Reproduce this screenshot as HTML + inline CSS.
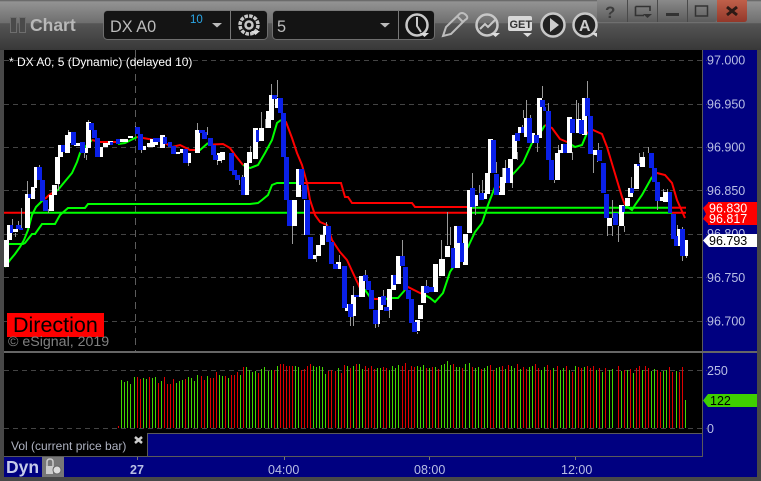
<!DOCTYPE html>
<html><head><meta charset="utf-8"><style>
html,body{margin:0;padding:0;background:#444}
svg{display:block}
text{font-family:"Liberation Sans",sans-serif}
</style></head><body>
<svg xmlns="http://www.w3.org/2000/svg" width="761" height="481" viewBox="0 0 761 481">
<defs>
<linearGradient id="top" x1="0" y1="0" x2="0" y2="1">
<stop offset="0" stop-color="#5e5e5e"/><stop offset=".04" stop-color="#939393"/><stop offset=".46" stop-color="#6e6e6e"/><stop offset=".47" stop-color="#555"/><stop offset="1" stop-color="#383838"/>
</linearGradient>
<linearGradient id="btn" x1="0" y1="0" x2="0" y2="1"><stop offset="0" stop-color="#8a8a8a"/><stop offset="1" stop-color="#5c5c5c"/></linearGradient>
<linearGradient id="cl" x1="0" y1="0" x2="0" y2="1"><stop offset="0" stop-color="#c0604a"/><stop offset="1" stop-color="#93382a"/></linearGradient>
</defs>
<rect width="761" height="481" fill="#484848"/>
<rect width="761" height="50" fill="url(#top)"/>
<!-- title -->
<rect x="10.5" y="17.5" width="6" height="15" fill="#4a4a4a" stroke="#6e6e6e"/>
<rect x="19.5" y="17.5" width="6" height="15" fill="#4a4a4a" stroke="#6e6e6e"/>
<text x="30" y="31" font-size="17.5" font-weight="bold" fill="#b8b8b8">Chart</text>
<!-- symbol box -->
<rect x="103.5" y="10.5" width="164" height="29" rx="4" fill="#141414" stroke="#8a8a8a" stroke-opacity=".7"/>
<path d="M230.5 11V39" stroke="#777"/>
<text x="110" y="32" font-size="16.3" fill="#bcbcbc">DX A0</text>
<text x="190" y="23" font-size="11.5" fill="#2aa6e6">10</text>
<path d="M212 23H222L217 27.500z" fill="#bbb"/>
<!-- gear -->
<g fill="none" stroke="#c8c8c8">
<circle cx="249" cy="25" r="9" stroke-width="3.500" stroke-dasharray="3.500 1.200"/>
<circle cx="249" cy="25" r="3.500" stroke-width="2.500"/>
</g>
<path d="M251 31H260L255.500 35z" fill="#ddd"/>
<!-- interval box -->
<rect x="272.500" y="10.500" width="162" height="29" rx="4" fill="#141414" stroke="#8a8a8a" stroke-opacity=".7"/>
<path d="M398.500 11V39" stroke="#777"/>
<text x="277" y="32" font-size="16.300" fill="#bcbcbc">5</text>
<path d="M380 23H390L385 27.500z" fill="#bbb"/>
<!-- clock -->
<circle cx="417" cy="25" r="10.500" fill="none" stroke="#c8c8c8" stroke-width="2.500"/>
<path d="M417 17V26L421 32" fill="none" stroke="#c8c8c8" stroke-width="2"/>
<path d="M420 33H429L424.500 37z" fill="#ddd"/>
<!-- pencil -->
<path d="M443 36L446 27L460 13.500Q463 12 466 15T465 20L451 34z" fill="none" stroke="#bdbdbd" stroke-width="2"/>
<path d="M457 16L463 22" stroke="#bdbdbd" stroke-width="2"/>
<!-- chart circle -->
<circle cx="487" cy="25" r="10.500" fill="none" stroke="#c8c8c8" stroke-width="2.500"/>
<path d="M480 29L485 24L488 27L495 20" fill="none" stroke="#c8c8c8" stroke-width="2"/>
<path d="M491 33H500L495.500 37z" fill="#ddd"/>
<!-- GET -->
<rect x="508" y="16" width="24" height="15" rx="2" fill="#d8d8d8"/>
<text x="509.500" y="28" font-size="11" font-weight="bold" fill="#333">GET</text>
<path d="M523 33H532L527.500 37z" fill="#ddd"/>
<!-- play -->
<circle cx="553" cy="25" r="11.500" fill="#222" stroke="#c8c8c8" stroke-width="2.500"/>
<path d="M550 18L559 25L550 32z" fill="#ccc"/>
<!-- A -->
<circle cx="585" cy="25" r="11.500" fill="#222" stroke="#c8c8c8" stroke-width="2.500"/>
<text x="579" y="31" font-size="16" font-weight="bold" fill="#ccc">A</text>
<path d="M591 33H597V37z" fill="#ddd"/>
<!-- window buttons -->
<path d="M597 0H717V19Q717 22 714 22H600Q597 22 597 19z" fill="url(#btn)"/>
<path d="M717 0H747V19Q747 22 744 22H717z" fill="url(#cl)"/>
<path d="M627.500 0V22M657.500 0V22M687.500 0V22" stroke="#4a4a4a"/>
<text x="605" y="18" font-size="17" font-weight="bold" fill="#3c3c3c">?</text>
<path d="M635.500 6.500H650V11M635.500 6.500V15.500H644" fill="none" stroke="#333" stroke-width="1.600"/>
<path d="M643 14H652L647.500 18z" fill="#333"/>
<rect x="666" y="13" width="13" height="3" fill="#333"/>
<rect x="695.500" y="6" width="12" height="10" fill="none" stroke="#333" stroke-width="1.500"/>
<path d="M727 7L737 15M737 7L727 15" stroke="#2d1a15" stroke-width="3"/>
<!-- panes -->
<rect x="4" y="50" width="699" height="383" fill="#000"/>
<rect x="703" y="50" width="54" height="427" fill="#000080"/>
<rect x="4" y="433" width="143" height="23" fill="#000"/>
<rect x="147" y="433" width="556" height="23" fill="#000080"/>
<rect x="4" y="457" width="699" height="20" fill="#000080"/>
<rect x="42" y="457" width="22" height="20" fill="#777"/>
<path d="M4 456.500H703M147 433.500H703" stroke="#5a5a5a"/>
<path d="M147.500 433V456M702.500 50V456" stroke="#5a5a5a"/>
<rect x="4" y="351" width="753" height="2" fill="#666"/>
<!-- grid -->
<g stroke="#444" stroke-dasharray="5 4" fill="none">
<path d="M4 60.500H707M4 104.500H707M4 147.500H707M4 190.500H707M4 234.500H707M4 277.500H707M4 321.500H707M4 370.500H707M4 428.500H707"/>
</g>
<path d="M135.500 50V351" stroke="#5c5c5c" stroke-dasharray="7 5"/>
<!-- levels -->
<g fill="none" stroke-width="2">
<path d="M4 212.700H30M305 212.700H467M672 212.700H686" stroke="#f00"/>
<path d="M30 212.700H305M467 212.700H672" stroke="#0f0"/>
<path d="M8 244H23L25 243L32 234H35L42 224H55L60 215L68 208H85L88 204H250L258 203L262 200L268 195L272 185L277 183H300" stroke="#0f0"/>
<path d="M300 183H341L345 197H348L352 203H412L415 207H467" stroke="#f00"/>
<path d="M467 207.700H672" stroke="#0f0"/>
<path d="M672 207.700H686" stroke="#f00"/>
<!-- trend -->
<g stroke="#0f0">
<path d="M5 267L10 260L15 254L20 247L24 240L28 230L32 215L36 207L40 203L44 199"/>
<path d="M54 192L58 190L62 185L72 173L77 162L80 153L85 147L92 140"/>
<path d="M118 144L125 143L137 137"/>
<path d="M196 150L200 150L208 143"/>
<path d="M243 165L250 168L258 165L265 153L272 140L277 123L281 120"/>
<path d="M360 288L365 290L370 297"/>
<path d="M385 299L392 298L398 298L405 290"/>
<path d="M425 295L430 298L435 302L443 293L450 272L460 257L468 247L475 232L482 223L488 205L495 187"/>
<path d="M500 187L515 172L523 163L532 143L542 130L545 125"/>
<path d="M567 142L575 147L582 145L587 133"/>
<path d="M625 205L632 210L635 205L642 195L652 177"/>
</g>
<g stroke="#f00">
<path d="M44 199L46 198L49 195L54 192"/>
<path d="M92 140L100 142H118"/>
<path d="M137 137L143 138L160 141L165 143L172 147L180 145L190 150L196 150"/>
<path d="M208 143L213 144.500L223 144L230 148L235 155L243 165"/>
<path d="M281 120L286 122L292 138L297 153L302 165L307 183L310 200L315 215L320 222L327 225L332 240L340 252L347 260L353 273L360 288"/>
<path d="M370 297L375 299L385 299"/>
<path d="M405 290L408 287L420 293L425 295"/>
<path d="M495 187L500 187"/>
<path d="M545 125L552 128L560 139L567 142"/>
<path d="M587 133L593 130L602 134L607 147L613 167L622 197L625 205"/>
<path d="M652 177L657 173L665 175L672 183L677 200L685 218"/>
</g>
</g>
<!-- wicks -->
<path stroke="#999" fill="none" d="M12.500 219V225M18.500 221V229M21.500 208V230M15.500 233V237M27.500 181V194M39.500 165V170M48.500 209V213M58.500 184V190M68.500 130V135M84.500 153V158M86.500 155V160M88.500 120V123M135.500 126V128M141.500 150V153M163.500 135V137M197.500 123V130M207.500 127V135M188.500 163V166M217.500 160V165M221.500 160V163M235.500 175V180M239.500 180V185M242.500 175V182M250.500 146V152M261.500 112V129M265.500 119V128M271.500 84V95M277.500 80V97M292.500 226V244M316.500 256V262M326.500 222V226M339.500 255V262M353.500 286V297M350.500 311V326M353.500 311V326M365.500 270V276M375.500 324V328M378.500 324V327M383.500 290V296M389.500 310V318M402.500 240V256M408.500 290V299M417.500 332V334M426.500 280V286M447.500 212V245M450.500 227V245M441.500 240V259M472.500 173V190M475.500 205V215M479.500 185V193M482.500 180V193M496.500 162V173M502.500 168V177M505.500 160V175M512.500 183V188M517.500 152V160M522.500 125V130M526.500 100V118M523.500 110V118M530.500 115V118M537.500 143V152M542.500 86V98M548.500 103V111M554.500 180V183M558.500 145V152M572.500 152V160M576.500 100V119M578.500 103V119M587.500 81V98M593.500 153V173M597.500 153V162M598.500 143V150M607.500 226V236M612.500 200V218M612.500 226V236M618.500 226V242M624.500 226V232M631.500 177V188M639.500 153V163M643.500 152V160M648.500 147V153M657.500 200V210M663.500 189V193M667.500 189V193M677.500 225V230M682.500 227V229M682.500 256V261M686.500 256V258"/>
<!-- white bodies -->
<path fill="#fff" d="M4 240H9V267H4zM7 225H12V240H7zM13 229H18V232H13zM25 194H30V228H25zM31 187H35V199H31zM34 167H37V188H34zM49 195H54V211H49zM52 185H57V195H52zM55 157H60V184H55zM58 145H63V157H58zM65 135H70V153H65zM68 132H71V143H68zM74 143H80V146H74zM83 148H88V153H83zM86 122H91V148H86zM98 147H103V157H98zM103 143H108V147H103zM108 141H113V145H108zM120 139H128V142H120zM128 136H133V138H128zM142 146H146V150H142zM147 143H155V147H147zM150 139H158V145H150zM160 135H165V148H160zM176 152H180V154H176zM180 149H184V153H180zM186 153H191V163H186zM195 130H200V153H195zM217 153H222V161H217zM220 152H225V160H220zM244 163H249V195H244zM247 152H252V163H247zM253 128H258V159H253zM259 128H264V141H259zM266 111H271V128H266zM269 95H274V120H269zM275 98H280V108H275zM292 200H297V226H292zM296 169H301V197H296zM304 200H306V235H304zM311 255H316V259H311zM316 245H321V256H316zM320 235H325V245H320zM323 226H328V235H323zM336 262H341V269H336zM345 304H350V311H345zM351 295H356V316H351zM359 276H365V297H359zM375 310H380V324H375zM378 297H383V310H378zM387 289H392V310H387zM391 275H396V290H391zM396 256H401V284H396zM415 320H420V331H415zM418 305H423V319H418zM421 286H426V303H421zM433 264H438V292H433zM439 259H445V276H439zM445 246H450V257H445zM454 226H460V268H454zM463 234H468V265H463zM467 190H472V233H467zM473 195H478V206H473zM482 193H487V199H482zM485 173H490V194H485zM488 139H493V173H488zM497 192H502V195H497zM500 177H505V195H500zM503 168H508V183H503zM508 159H513V183H508zM512 135H517V159H512zM518 127H523V133H518zM524 118H529V137H524zM530 133H535V143H530zM537 98H542V138H537zM555 153H560V180H555zM558 150H563V153H558zM561 144H566V152H561zM567 117H572V153H567zM576 119H581V133H576zM582 98H587V135H582zM593 150H598V155H593zM607 218H612V226H607zM619 205H624V226H619zM625 198H630V206H625zM628 188H633V197H628zM634 164H639V189H634zM640 157H645V167H640zM660 197H665V201H660zM663 192H668V202H663zM677 229H681V246H677zM683 240H688V256H683z"/>
<!-- blue bodies -->
<path fill="#0a20e8" d="M10 225H13V233H10zM16 225H21V229H16zM19 228H23V230H19zM28 194H31V198H28zM37 167H42V180H37zM40 180H45V201H40zM43 200H48V211H43zM61 145H65V152H61zM71 132H76V145H71zM80 142H85V153H80zM89 123H94V130H89zM92 130H97V138H92zM95 138H100V157H95zM110 142H113V145H110zM116 139H120V144H116zM135 127H140V134H135zM138 134H143V150H138zM153 138H160V142H153zM163 137H167V144H163zM168 142H172V147H168zM171 146H176V154H171zM183 149H188V163H183zM199 130H205V133H199zM202 132H207V139H202zM208 138H213V146H208zM211 145H216V155H211zM213 155H218V160H213zM229 153H234V171H229zM232 170H237V175H232zM235 175H240V180H235zM241 177H245V195H241zM256 130H259V142H256zM272 95H277V99H272zM278 98H283V113H278zM281 113H286V157H281zM284 157H289V200H284zM287 200H292V226H287zM299 169H304V185H299zM302 185H307V199H302zM305 200H310V235H305zM308 237H313V259H308zM326 226H331V242H326zM329 242H334V264H329zM333 264H338V269H333zM342 266H347V308H342zM348 304H353V317H348zM354 295H359V297H354zM363 275H368V281H363zM366 281H371V290H366zM369 290H374V309H369zM373 310H378V324H373zM381 296H386V305H381zM384 307H389V311H384zM393 275H396V285H393zM400 256H405V266H400zM403 267H408V290H403zM406 290H411V299H406zM409 299H414V323H409zM412 322H417V332H412zM424 286H429V293H424zM429 287H434V292H429zM451 248H455V268H451zM457 226H462V243H457zM460 243H464V262H460zM470 188H475V207H470zM479 193H484V200H479zM491 140H496V173H491zM494 174H499V195H494zM506 168H510V183H506zM515 133H520V141H515zM521 127H524V133H521zM527 118H532V143H527zM534 135H539V143H534zM540 100H545V107H540zM543 107H546V111H543zM546 111H551V160H546zM549 160H554V180H549zM563 144H567V153H563zM570 119H575V133H570zM579 120H584V134H579zM585 98H590V116H585zM588 116H593V154H588zM597 150H602V161H597zM601 163H606V193H601zM604 194H609V218H604zM613 213H618V225H613zM622 206H625V212H622zM630 188H634V193H630zM637 164H640V166H637zM649 153H654V168H649zM652 168H657V182H652zM655 182H660V201H655zM668 192H672V213H668zM671 214H676V239H671zM674 236H678V246H674zM680 229H685V256H680z"/>
<!-- chart text -->
<text x="9" y="66" font-size="12" fill="#fff">* DX A0, 5 (Dynamic) (delayed 10)</text>
<rect x="7" y="313" width="97" height="24" fill="#f00"/>
<text x="13" y="332" font-size="21.500" fill="#000">Direction</text>
<text x="8" y="346" font-size="14.200" fill="#808080">© eSignal, 2019</text>
<!-- axis labels -->
<g font-size="12.500" fill="#b9bfe4">
<text x="707" y="64.500">97.000</text>
<text x="707" y="108.500">96.950</text>
<text x="707" y="151.500">96.900</text>
<text x="707" y="195">96.850</text>
<text x="707" y="238">96.800</text>
<text x="707" y="282">96.750</text>
<text x="707" y="325.500">96.700</text>
<text x="707" y="375">250</text>
<text x="707" y="433">0</text>
</g>
<path d="M703 208L708 203V202H757V225H708V223.500L703 219L706 214z" fill="#f00"/>
<text x="709" y="212.500" font-size="12.500" fill="#fff">96.830</text>
<text x="709" y="223" font-size="12.500" fill="#fff">96.817</text>
<path d="M703 240.500L709 234H757V247H709z" fill="#fff"/>
<text x="709" y="245" font-size="12.500" fill="#000">96.793</text>
<path d="M703 400.500L708 394H757V407H708z" fill="#3fd000"/>
<text x="710" y="405" font-size="12.500" fill="#000">122</text>
<!-- volume -->
<g stroke-width="1" fill="none" shape-rendering="crispEdges">
<path stroke="#43d800" d="M121.500 428V380M124.500 428V382M127.500 428V381M130.500 428V384M134.500 428V377M143.500 428V378M146.500 428V379M152.500 428V378M155.500 428V377M161.500 428V381M176.500 428V383M179.500 428V381M182.500 428V380M188.500 428V377M191.500 428V378M194.500 428V381M197.500 428V375M207.500 428V376M219.500 428V375M222.500 428V376M228.500 428V378M240.500 428V375M246.500 428V367M249.500 428V370M252.500 428V372M255.500 428V371M261.500 428V369M264.500 428V367M268.500 428V371M271.500 428V370M277.500 428V366M295.500 428V366M298.500 428V367M313.500 428V366M316.500 428V367M319.500 428V366M322.500 428V367M325.500 428V374M338.500 428V368M347.500 428V366M353.500 428V366M359.500 428V364M362.500 428V369M377.500 428V368M380.500 428V368M389.500 428V370M392.500 428V366M395.500 428V368M398.500 428V365M417.500 428V366M420.500 428V367M423.500 428V365M429.500 428V368M435.500 428V367M441.500 428V365M444.500 428V364M447.500 428V361M450.500 428V365M456.500 428V367M459.500 428V367M465.500 428V364M469.500 428V363M475.500 428V368M478.500 428V367M484.500 428V368M487.500 428V366M496.500 428V368M499.500 428V367M505.500 428V369M511.500 428V366M514.500 428V368M520.500 428V369M529.500 428V367M532.500 428V366M541.500 428V370M544.500 428V367M553.500 428V368M560.500 428V370M563.500 428V368M569.500 428V370M575.500 428V366M584.500 428V367M596.500 428V370M602.500 428V372M609.500 428V370M612.500 428V369M621.500 428V371M627.500 428V370M633.500 428V373M642.500 428V370M651.500 428V371M654.500 428V369M663.500 428V371M666.500 428V370M676.500 428V371M685.500 428V400"/>
<path stroke="#e00000" d="M118.500 428V426M137.500 428V377M140.500 428V379M149.500 428V377M158.500 428V383M164.500 428V377M167.500 428V384M170.500 428V384M173.500 428V379M185.500 428V379M201.500 428V376M204.500 428V380M210.500 428V378M213.500 428V378M216.500 428V372M225.500 428V376M231.500 428V375M234.500 428V375M237.500 428V372M243.500 428V367M258.500 428V373M274.500 428V370M280.500 428V364M283.500 428V364M286.500 428V366M289.500 428V366M292.500 428V366M301.500 428V370M304.500 428V369M307.500 428V366M310.500 428V364M328.500 428V371M331.500 428V370M335.500 428V371M341.500 428V373M344.500 428V365M350.500 428V368M356.500 428V364M365.500 428V366M368.500 428V368M371.500 428V366M374.500 428V369M383.500 428V367M386.500 428V368M402.500 428V366M405.500 428V363M408.500 428V370M411.500 428V366M414.500 428V367M426.500 428V368M432.500 428V367M438.500 428V369M453.500 428V364M462.500 428V368M472.500 428V367M481.500 428V369M490.500 428V365M493.500 428V370M502.500 428V366M508.500 428V365M517.500 428V364M523.500 428V367M526.500 428V369M535.500 428V364M538.500 428V368M547.500 428V365M550.500 428V370M557.500 428V366M566.500 428V366M572.500 428V372M578.500 428V367M581.500 428V368M587.500 428V366M590.500 428V368M593.500 428V366M599.500 428V368M605.500 428V368M618.500 428V366M624.500 428V370M630.500 428V369M636.500 428V368M639.500 428V366M645.500 428V366M648.500 428V368M657.500 428V370M660.500 428V372M669.500 428V367M672.500 428V372M679.500 428V372M682.500 428V367"/>
</g>
<!-- legend + bottom -->
<text x="11" y="450" font-size="12" fill="#aeb2c0">Vol (current price bar)</text>
<path d="M135 437L142 443M142 437L135 443" stroke="#ccc" stroke-width="2.500"/>
<text x="6" y="473" font-size="17.500" font-weight="bold" fill="#c6cbe8">Dyn</text>
<path d="M47 467V462Q47 459 50 459T53 462V467" fill="none" stroke="#ccc" stroke-width="1.500"/>
<rect x="46" y="466" width="7" height="8" fill="#ccc"/>
<circle cx="57" cy="470" r="4" fill="#ddd" stroke="#666"/>
<path d="M137.500 457V460M284.500 457V460M429.500 457V460M575.500 457V460" stroke="#777"/>
<text x="130" y="474" font-size="12.500" font-weight="bold" fill="#b9bfe4">27</text>
<g font-size="12.500" fill="#b9bfe4">
<text x="268" y="474">04:00</text>
<text x="414" y="474">08:00</text>
<text x="561" y="474">12:00</text>
</g>
</svg>
</body></html>
